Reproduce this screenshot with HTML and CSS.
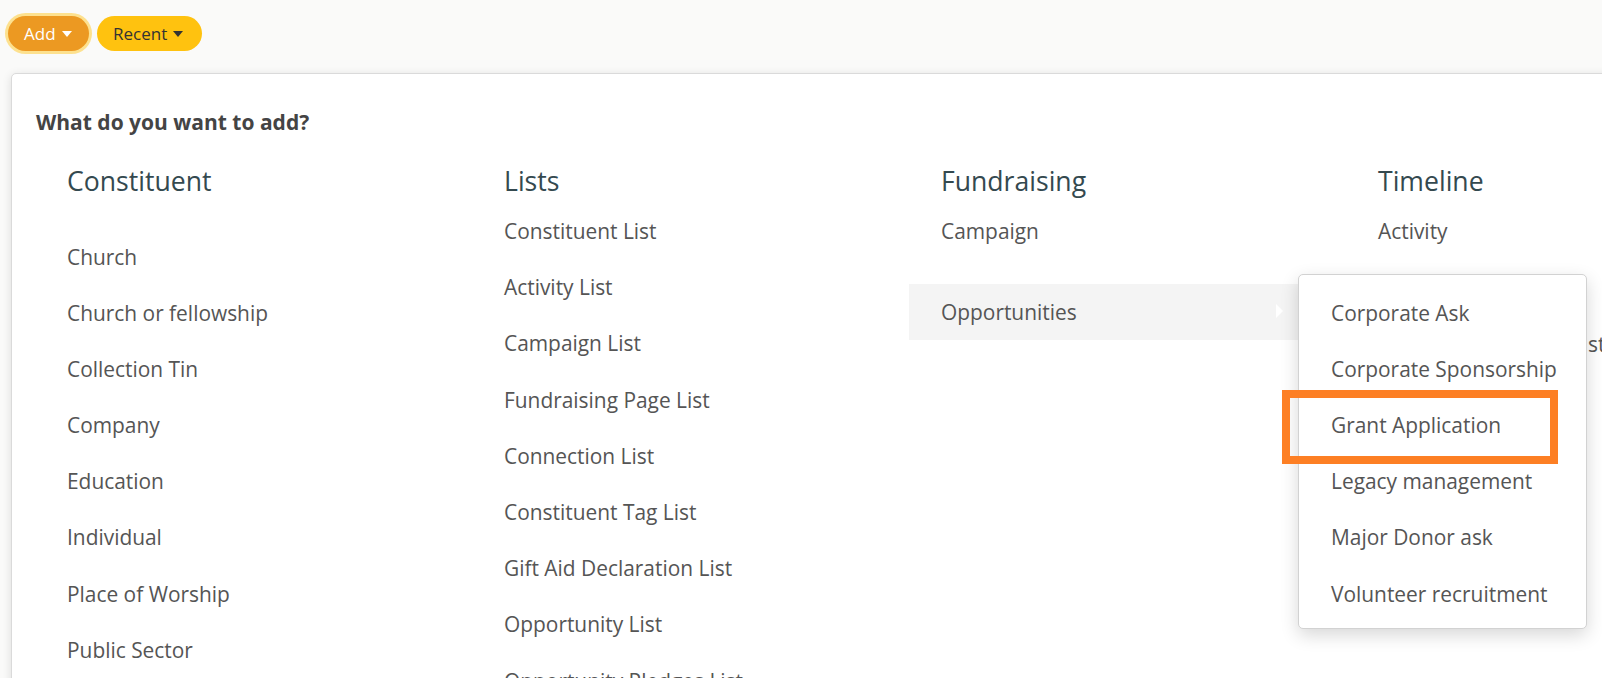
FILE: index.html
```html
<!DOCTYPE html>
<html lang="en">
<head>
    <meta charset="UTF-8">
    <title>Add menu</title>
    <link rel="stylesheet" href="styles.css">
</head>
<body>
    <div class="toolbar">
        <button class="btn btn-add">Add <span class="caret"></span></button>
        <button class="btn btn-recent">Recent <span class="caret"></span></button>
    </div>

    <div class="add-panel">
        <div class="panel-title">What do you want to add?</div>
        <div class="columns">
            <div class="col">
                <div class="col-head gap-after">Constituent</div>
                <div class="item">Church</div>
                <div class="item">Church or fellowship</div>
                <div class="item">Collection Tin</div>
                <div class="item">Company</div>
                <div class="item">Education</div>
                <div class="item">Individual</div>
                <div class="item">Place of Worship</div>
                <div class="item">Public Sector</div>
            </div>
            <div class="col">
                <div class="col-head">Lists</div>
                <div class="item">Constituent List</div>
                <div class="item">Activity List</div>
                <div class="item">Campaign List</div>
                <div class="item">Fundraising Page List</div>
                <div class="item">Connection List</div>
                <div class="item">Constituent Tag List</div>
                <div class="item">Gift Aid Declaration List</div>
                <div class="item">Opportunity List</div>
                <div class="item">Opportunity Pledges List</div>
            </div>
            <div class="col">
                <div class="col-head">Fundraising</div>
                <div class="item">Campaign</div>
                <div class="item has-sub active">
                    Opportunities
                    <span class="sub-arrow"></span>
                    <div class="submenu">
                        <div class="item">Corporate Ask</div>
                        <div class="item">Corporate Sponsorship</div>
                        <div class="item">Grant Application</div>
                        <div class="item">Legacy management</div>
                        <div class="item">Major Donor ask</div>
                        <div class="item">Volunteer recruitment</div>
                    </div>
                </div>
            </div>
            <div class="col">
                <div class="col-head">Timeline</div>
                <div class="item">Activity</div>
                <div class="item low">Constituent Activity List</div>
            </div>
        </div>
    </div>

    <div class="highlight"></div>
</body>
</html>
```

FILE: styles.css
```css
html, body {
    margin: 0;
    height: 100%;
    overflow: hidden;
}
body {
    font-family: "Open Sans", "Noto Sans", sans-serif;
    background-color: #fafaf9;
    color: #555;
}
.toolbar {
    display: flex;
    gap: 8px;
    padding: 16px 0 0 8px;
}
.btn {
    display: flex;
    align-items: center;
    height: 35px;
    border: none;
    border-radius: 18px;
    font-family: inherit;
    font-size: 17px;
    padding: 0 0 0 16px;
    gap: 6px;
}
.btn-add {
    background: #ec9922;
    color: #fff;
    box-shadow: 0 0 0 3px #fde18f;
    width: 81px;
}
.btn-recent {
    background: #ffc20f;
    color: #333;
    width: 105px;
    padding-left: 16px;
}
.caret {
    width: 0;
    height: 0;
    border-left: 5px solid transparent;
    border-right: 5px solid transparent;
    border-top: 6px solid currentColor;
}
.add-panel {
    margin: 22px 0 0 11px;
    width: 1700px;
    height: 700px;
    background: #fff;
    border: 1px solid #dadada;
    border-radius: 5px;
    box-shadow: 0 2px 10px rgba(0, 0, 0, 0.12);
    padding: 34px 0 0 23px;
    box-sizing: border-box;
}
.panel-title {
    font-size: 21px;
    font-weight: bold;
    color: #444;
    line-height: 28px;
    padding-left: 1px;
}
.columns {
    display: flex;
    margin-top: 24px;
}
.col {
    width: 437px;
    flex: none;
}
.col-head {
    font-size: 26.6px;
    color: #34494f;
    line-height: 43px;
    padding-left: 32px;
}
.gap-after {
    margin-bottom: 25.5px;
}
.item {
    font-size: 20.9px;
    line-height: 56.2px;
    height: 56.2px;
    padding-left: 32px;
    white-space: nowrap;
}
.has-sub {
    position: relative;
    margin-top: 25px;
}
.active {
    background: #f4f4f4;
}
.sub-arrow {
    position: absolute;
    left: 367px;
    top: 20px;
    width: 0;
    height: 0;
    border-top: 7.5px solid transparent;
    border-bottom: 7.5px solid transparent;
    border-left: 7px solid #fff;
}
.submenu {
    position: absolute;
    left: 389px;
    top: -10px;
    width: 289px;
    box-sizing: border-box;
    background: #fff;
    border: 1px solid #d2d2d2;
    border-radius: 5px;
    box-shadow: 0 6px 18px rgba(0, 0, 0, 0.16);
    padding: 9.5px 0 6px;
    z-index: 2;
}
.submenu .item {
    padding-left: 32px;
    background: #fff;
}
.low {
    margin-top: 57px;
}
.highlight {
    position: absolute;
    left: 1282px;
    top: 390px;
    width: 276px;
    height: 74px;
    box-sizing: border-box;
    border: 8px solid #fd7f24;
    z-index: 5;
}
```
